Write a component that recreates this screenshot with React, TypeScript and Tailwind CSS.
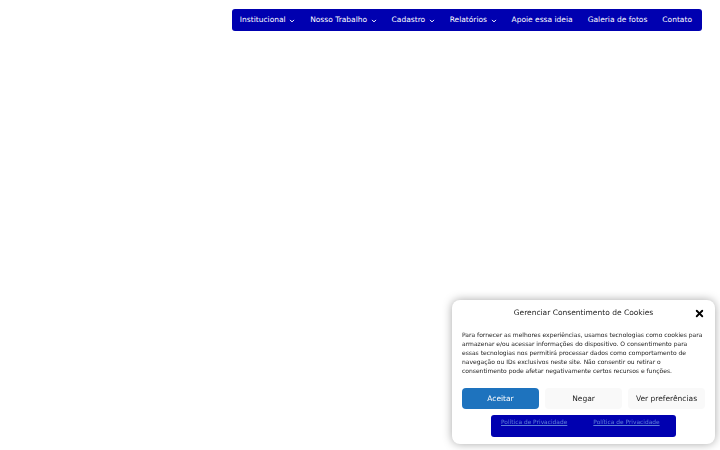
import React from "react";
import { X } from "lucide-react";

const navItems = [
  { label: "Institucional", sub: true },
  { label: "Nosso Trabalho", sub: true },
  { label: "Cadastro", sub: true },
  { label: "Relatórios", sub: true },
  { label: "Apoie essa ideia", sub: false },
  { label: "Galeria de fotos", sub: false },
  { label: "Contato", sub: false },
];

const Chevron = () => (
  <svg width="6" height="4" viewBox="0 0 6 4" className="ml-[3.5px] mt-[1px]">
    <path d="M1 0.9 L3 2.9 L5 0.9" fill="none" stroke="currentColor" strokeWidth="1" />
  </svg>
);

export default function App() {
  return (
    <div
      className="relative w-[720px] h-[450px] bg-white overflow-hidden"
      style={{ fontFamily: '"DejaVu Sans", sans-serif' }}
    >
      <header className="flex justify-end pt-[9px] pr-[18px]">
        <nav className="flex items-center h-[22px] bg-[#0000b0] rounded-[3px] pl-[0px] pr-[2.5px]">
          {navItems.map((item) => (
            <a
              key={item.label}
              className="flex items-center text-white text-[7.5px] px-[7.5px] whitespace-nowrap"
            >
              {item.label}
              {item.sub && <Chevron />}
            </a>
          ))}
        </nav>
      </header>

      <div className="fixed right-[5px] bottom-[6px] w-[263px] bg-white rounded-[8px] shadow-[0_0_10px_rgba(0,0,0,0.35)] px-[10px] pt-[6px] pb-[7px]">
        <div className="relative flex items-center justify-center h-[14px]">
          <span className="text-[7.5px] text-[#222]">Gerenciar Consentimento de Cookies</span>
          <X className="absolute right-0 top-[2px] w-[11px] h-[11px] text-black" strokeWidth={4} />
        </div>
        <p className="mt-[9.5px] text-[6px] leading-[9px] text-[#222]">
          Para fornecer as melhores experiências, usamos tecnologias como cookies para
          armazenar e/ou acessar informações do dispositivo. O consentimento para
          essas tecnologias nos permitirá processar dados como comportamento de
          navegação ou IDs exclusivos neste site. Não consentir ou retirar o
          consentimento pode afetar negativamente certos recursos e funções.
        </p>
        <div className="mt-[13.5px] flex gap-[6px]">
          <button className="w-[77px] h-[21px] rounded-[4px] bg-[#1e73be] text-white text-[7.5px]">
            Aceitar
          </button>
          <button className="w-[77px] h-[21px] rounded-[4px] bg-[#f9f9f9] text-[#222] text-[7.5px]">
            Negar
          </button>
          <button className="w-[77px] h-[21px] rounded-[4px] bg-[#f9f9f9] text-[#222] text-[7.5px]">
            Ver preferências
          </button>
        </div>
        <div className="mt-[6px] mx-auto w-[185px] h-[22px] bg-[#0000b0] rounded-[3px] flex gap-[26px] pt-[3px] pl-[10px]">
          <a className="text-[5.9px] text-[#5e7fd8] underline">Política de Privacidade</a>
          <a className="text-[5.9px] text-[#5e7fd8] underline">Política de Privacidade</a>
        </div>
      </div>
    </div>
  );
}
